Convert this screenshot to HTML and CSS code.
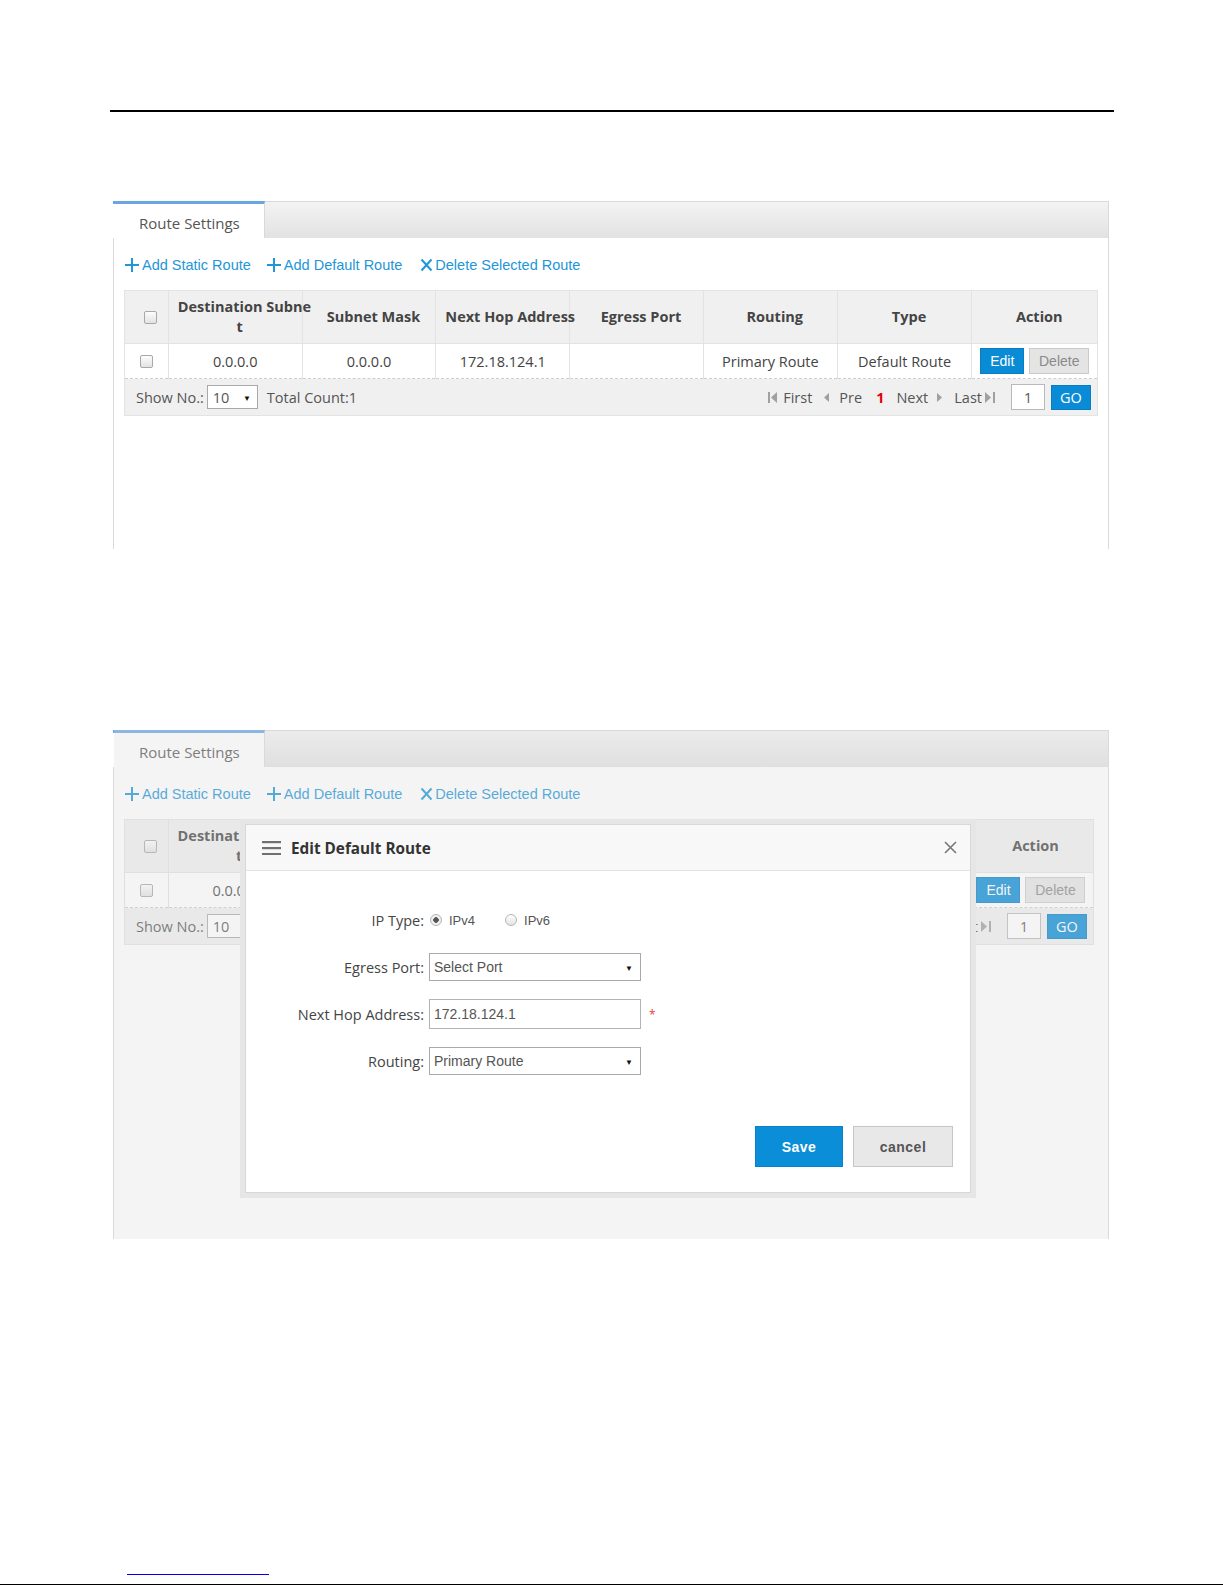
FILE: index.html
```html
<!DOCTYPE html>
<html>
<head>
  <meta charset="utf-8">
  <title>Route Settings</title>
  <link rel="stylesheet" href="styles.css">
</head>
<body>
  <div class="doc-rule"></div>

  <!-- Route list -->
  <div class="panel panel-list">
    <div class="tabs">
      <div class="tab">Route Settings</div>
    </div>
    <div class="panel-body">
      <div class="toolbar">
        <a class="tool" href="#"><svg class="ico-plus" width="16" height="16" viewBox="0 0 16 16"><path d="M8 1V15M1 8H15"/></svg>Add Static Route</a>
        <a class="tool" href="#"><svg class="ico-plus" width="16" height="16" viewBox="0 0 16 16"><path d="M8 1V15M1 8H15"/></svg>Add Default Route</a>
        <a class="tool tool-del" href="#"><svg class="ico-x" width="13" height="14" viewBox="0 0 13 14"><path d="M1.5 1.5L11.5 12.5M11.5 1.5L1.5 12.5"/></svg>Delete Selected Route</a>
      </div>

      <table class="grid">
        <colgroup>
          <col class="col-check"><col class="col-data"><col class="col-data"><col class="col-data">
          <col class="col-data"><col class="col-data"><col class="col-type"><col class="col-action">
        </colgroup>
        <thead>
          <tr>
            <th><input type="checkbox"></th>
            <th>Destination Subne<br>t</th>
            <th>Subnet Mask</th>
            <th>Next Hop Address</th>
            <th>Egress Port</th>
            <th>Routing</th>
            <th>Type</th>
            <th>Action</th>
          </tr>
        </thead>
        <tbody>
          <tr>
            <td><input type="checkbox"></td>
            <td>0.0.0.0</td>
            <td>0.0.0.0</td>
            <td>172.18.124.1</td>
            <td></td>
            <td>Primary Route</td>
            <td>Default Route</td>
            <td><div class="row-actions"><button class="btn-edit">Edit</button><button class="btn-del">Delete</button></div></td>
          </tr>
        </tbody>
        <tfoot>
          <tr>
            <td colspan="8">
              <div class="pager">
                <div class="pager-size">
                  Show No.:
                  <span class="select select-size"><select><option>10</option></select></span>
                  <span class="pager-total">Total Count:1</span>
                </div>
                <div class="pager-nav">
                  <a class="pg pg-first" href="#"><svg width="9" height="11" viewBox="0 0 9 11"><rect width="2" height="11"/><path d="M9 0V11L3 5.5Z"/></svg>First</a>
                  <a class="pg pg-prev" href="#"><svg width="5" height="9" viewBox="0 0 5 9"><path d="M5 0V9L0 4.5Z"/></svg>Pre</a>
                  <span class="pg-cur">1</span>
                  <a class="pg pg-next" href="#">Next<svg width="5" height="9" viewBox="0 0 5 9"><path d="M0 0V9L5 4.5Z"/></svg></a>
                  <a class="pg pg-last" href="#">Last<svg width="10" height="11" viewBox="0 0 10 11"><path d="M0 0V11L6 5.5Z"/><rect x="8" width="2" height="11"/></svg></a>
                  <input class="pg-input" type="text" value="1">
                  <button class="btn-go">GO</button>
                </div>
              </div>
            </td>
          </tr>
        </tfoot>
      </table>
    </div>
  </div>

  <!-- Edit dialog open over the list -->
  <div class="panel panel-edit">
    <div class="tabs">
      <div class="tab">Route Settings</div>
    </div>
    <div class="panel-body">
      <div class="toolbar">
        <a class="tool" href="#"><svg class="ico-plus" width="16" height="16" viewBox="0 0 16 16"><path d="M8 1V15M1 8H15"/></svg>Add Static Route</a>
        <a class="tool" href="#"><svg class="ico-plus" width="16" height="16" viewBox="0 0 16 16"><path d="M8 1V15M1 8H15"/></svg>Add Default Route</a>
        <a class="tool tool-del" href="#"><svg class="ico-x" width="13" height="14" viewBox="0 0 13 14"><path d="M1.5 1.5L11.5 12.5M11.5 1.5L1.5 12.5"/></svg>Delete Selected Route</a>
      </div>

      <table class="grid">
        <colgroup>
          <col class="col-check"><col class="col-data"><col class="col-data"><col class="col-data">
          <col class="col-data"><col class="col-data"><col class="col-type"><col class="col-action">
        </colgroup>
        <thead>
          <tr>
            <th><input type="checkbox"></th>
            <th class="th-clip">Destination Subne<br>t</th>
            <th>Subnet Mask</th>
            <th>Next Hop Address</th>
            <th>Egress Port</th>
            <th>Routing</th>
            <th>Type</th>
            <th>Action</th>
          </tr>
        </thead>
        <tbody>
          <tr>
            <td><input type="checkbox"></td>
            <td>0.0.0.0</td>
            <td>0.0.0.0</td>
            <td>172.18.124.1</td>
            <td></td>
            <td>Primary Route</td>
            <td>Default Route</td>
            <td><div class="row-actions"><button class="btn-edit">Edit</button><button class="btn-del">Delete</button></div></td>
          </tr>
        </tbody>
        <tfoot>
          <tr>
            <td colspan="8">
              <div class="pager">
                <div class="pager-size">
                  Show No.:
                  <span class="select select-size"><select><option>10</option></select></span>
                  <span class="pager-total">Total Count:1</span>
                </div>
                <div class="pager-nav">
                  <a class="pg pg-first" href="#"><svg width="9" height="11" viewBox="0 0 9 11"><rect width="2" height="11"/><path d="M9 0V11L3 5.5Z"/></svg>First</a>
                  <a class="pg pg-prev" href="#"><svg width="5" height="9" viewBox="0 0 5 9"><path d="M5 0V9L0 4.5Z"/></svg>Pre</a>
                  <span class="pg-cur">1</span>
                  <a class="pg pg-next" href="#">Next<svg width="5" height="9" viewBox="0 0 5 9"><path d="M0 0V9L5 4.5Z"/></svg></a>
                  <a class="pg pg-last" href="#">Last<svg width="10" height="11" viewBox="0 0 10 11"><path d="M0 0V11L6 5.5Z"/><rect x="8" width="2" height="11"/></svg></a>
                  <input class="pg-input" type="text" value="1">
                  <button class="btn-go">GO</button>
                </div>
              </div>
            </td>
          </tr>
        </tfoot>
      </table>
    </div>

    <div class="mask"></div>

    <div class="modal">
      <div class="modal-inner">
        <div class="modal-head">
          <svg class="ico-menu" width="19" height="14" viewBox="0 0 19 14"><rect y="0" width="19" height="2.2"/><rect y="6" width="19" height="2.2"/><rect y="12" width="19" height="2.2"/></svg>
          <span class="modal-title">Edit Default Route</span>
          <svg class="ico-close" width="13" height="13" viewBox="0 0 13 13"><path d="M1 1L12 12M12 1L1 12"/></svg>
        </div>
        <div class="modal-body">
          <div class="form-row">
            <label class="form-label">IP Type:</label>
            <label class="radio"><input type="radio" name="iptype" checked>IPv4</label>
            <label class="radio"><input type="radio" name="iptype">IPv6</label>
          </div>
          <div class="form-row">
            <label class="form-label">Egress Port:</label>
            <span class="select select-field"><select><option>Select Port</option></select></span>
          </div>
          <div class="form-row">
            <label class="form-label">Next Hop Address:</label>
            <input class="text-field" type="text" value="172.18.124.1">
            <span class="req">*</span>
          </div>
          <div class="form-row form-row-last">
            <label class="form-label">Routing:</label>
            <span class="select select-field"><select><option>Primary Route</option></select></span>
          </div>
          <div class="form-actions">
            <button class="btn-save">Save</button>
            <button class="btn-cancel">cancel</button>
          </div>
        </div>
      </div>
    </div>
  </div>

  <div class="doc-link"></div>
  <div class="doc-bottom"></div>
</body>
</html>
```

FILE: styles.css
```css
body {
  margin: 0;
  background: #fff;
  font-family: "Open Sans", "Liberation Sans", sans-serif;
  font-size: 14.5px;
  color: #444;
}

a {
  text-decoration: none;
}

button {
  cursor: pointer;
}

.doc-rule {
  width: 1004px;
  height: 2px;
  margin: 110px 0 0 110px;
  background: #000;
}

/* panel frame */
.panel {
  position: relative;
  box-sizing: border-box;
  width: 996px;
  margin-left: 113px;
  border-left: 1px solid #dadada;
  border-right: 1px solid #dadada;
  background: #fff;
}

.panel-list {
  margin-top: 89px;
  height: 348px;
}

.panel-edit {
  margin-top: 181px;
  height: 509px;
}

.tabs {
  box-sizing: border-box;
  height: 37px;
  border-top: 1px solid #d9d9d9;
  background: linear-gradient(#f3f3f3, #e2e2e2);
}

.tab {
  box-sizing: border-box;
  width: 152px;
  height: 37px;
  margin: -1px 0 0 -1px;
  padding: 8px 0 0 26px;
  border-top: 3px solid #6aa6e2;
  border-right: 1px solid #d9d9d9;
  background: #fff;
  color: #555;
  font-size: 15px;
  line-height: 22px;
}

.panel-body {
  padding: 0 10px;
}

.panel-edit .panel-body {
  padding-right: 14px;
}

/* toolbar */
.toolbar {
  display: flex;
  align-items: center;
  height: 20px;
  padding: 17px 0 15px;
}

.tool {
  display: flex;
  align-items: center;
  margin-right: 15px;
  color: #1e96d8;
  font-family: "Liberation Sans", Arial, sans-serif;
  font-size: 14.5px;
}

.tool svg {
  stroke: #1e96d8;
  stroke-width: 2;
  fill: none;
}

.ico-plus {
  margin-right: 2px;
}

.tool-del {
  margin-left: 3px;
}

.ico-x {
  margin-right: 2px;
}

/* route table */
.grid {
  width: 100%;
  table-layout: fixed;
  border-collapse: collapse;
  border: 1px solid #dedede;
}

.col-check { width: 4.5%; }
.col-data { width: 13.75%; }
.col-type { width: 13.85%; }
.col-action { width: 12.9%; }

.grid th,
.grid td {
  padding: 0;
  border: 1px solid #e3e3e3;
}

.grid th {
  height: 52px;
  padding-left: 9px;
  background: #f0f0f0;
  color: #444;
  font-weight: 700;
  line-height: 20px;
  white-space: nowrap;
}

.grid .th-clip {
  overflow: hidden;
}

.grid tbody td {
  height: 34px;
  background: #fff;
  text-align: center;
  border-bottom: none;
}

.grid tfoot td {
  height: 36px;
  padding: 0 6px 0 11px;
  background: #f0f0f0;
  border-top: 1px dashed #cdcdcd;
}

input[type="checkbox"] {
  appearance: none;
  -webkit-appearance: none;
  display: block;
  box-sizing: border-box;
  width: 13px;
  height: 13px;
  margin: 0 auto;
  border: 1px solid #a8a8a8;
  border-radius: 2px;
  background: linear-gradient(#fdfdfd, #e2e2e2);
}

.row-actions {
  display: flex;
  justify-content: center;
  gap: 5px;
}

.btn-edit,
.btn-del {
  box-sizing: border-box;
  height: 26px;
  padding: 0;
  border-radius: 0;
  font-family: "Liberation Sans", Arial, sans-serif;
  font-size: 14px;
}

.btn-edit {
  width: 44px;
  border: 1px solid #0a7cc2;
  background: #0a8bd6;
  color: #fff;
}

.btn-del {
  width: 60px;
  border: 1px solid #cbcbcb;
  background: #e4e4e4;
  color: #8a8a8a;
}

/* pager */
.pager {
  display: flex;
  align-items: center;
  justify-content: space-between;
  color: #555;
}

.pager-size {
  display: flex;
  align-items: center;
}

.select {
  position: relative;
  display: inline-block;
}

.select::after {
  content: "\25BC";
  position: absolute;
  top: 50%;
  transform: translateY(-50%);
  font-size: 8px;
  color: #111;
  pointer-events: none;
}

.select select {
  appearance: none;
  -webkit-appearance: none;
  display: block;
  box-sizing: border-box;
  margin: 0;
  border: 1px solid #a9a9a9;
  border-radius: 0;
  background: #fff;
  color: #555;
}

.select-size {
  margin-left: 3px;
}

.select-size::after {
  right: 7px;
}

.select-size select {
  width: 51px;
  height: 24px;
  padding: 0 0 0 5px;
  font-family: "Open Sans", sans-serif;
  font-size: 14.5px;
}

.pager-total {
  margin-left: 9px;
}

.pager-nav {
  display: flex;
  align-items: center;
}

.pg {
  display: flex;
  align-items: center;
  margin-left: 12px;
  color: #555;
}

.pg svg {
  fill: #a0a0a0;
}

.pg-first { margin-left: 0; }
.pg-first svg { margin-right: 6px; }
.pg-prev svg { margin-right: 10px; }
.pg-next svg { margin-left: 9px; }
.pg-last svg { margin-left: 3px; }

.pg-cur {
  margin-left: 14px;
  color: #e8000b;
  font-weight: 700;
}

.pg-input {
  box-sizing: border-box;
  width: 34px;
  height: 26px;
  margin-left: 16px;
  padding: 0;
  border: 1px solid #b9b9b9;
  text-align: center;
  font-family: "Open Sans", sans-serif;
  font-size: 14px;
  color: #555;
}

.btn-go {
  box-sizing: border-box;
  width: 40px;
  height: 25px;
  margin-left: 6px;
  padding: 0;
  border: 1px solid #0a7cc2;
  background: #0a8bd6;
  color: #fff;
  font-family: "Open Sans", sans-serif;
  font-size: 14.5px;
}

/* dialog */
.mask {
  position: absolute;
  inset: 0;
  z-index: 1;
  background: rgba(220, 220, 220, 0.3);
}

.modal {
  position: absolute;
  left: 126px;
  top: 89px;
  z-index: 2;
  box-sizing: border-box;
  width: 736px;
  border: 5px solid #e6e6e6;
}

.modal-inner {
  border: 1px solid #d8d8d8;
  background: #fff;
}

.modal-head {
  display: flex;
  align-items: center;
  height: 45px;
  padding: 0 13px 0 16px;
  border-bottom: 1px solid #e3e3e3;
  background: #f8f8f8;
}

.ico-menu {
  fill: #707070;
}

.modal-title {
  flex: 1;
  margin-left: 10px;
  font-size: 15.3px;
  font-weight: 700;
  color: #333;
}

.ico-close {
  stroke: #777;
  stroke-width: 1.6;
  fill: none;
}

.modal-body {
  padding: 34px 0 25px;
}

.form-row {
  display: flex;
  align-items: center;
  height: 30px;
  margin-bottom: 17px;
}

.form-row-last {
  margin-bottom: 50px;
}

.form-label {
  box-sizing: border-box;
  width: 183px;
  padding-right: 5px;
  text-align: right;
  color: #444;
}

.radio {
  display: flex;
  align-items: center;
  margin: 0 29px 0 1px;
  font-family: "Liberation Sans", Arial, sans-serif;
  font-size: 13px;
  color: #555;
}

input[type="radio"] {
  appearance: none;
  -webkit-appearance: none;
  box-sizing: border-box;
  width: 12px;
  height: 12px;
  margin: 0 7px 0 0;
  border: 1px solid #b5b5b5;
  border-radius: 50%;
  background: linear-gradient(#fdfdfd, #e4e4e4);
}

input[type="radio"]:checked {
  background: radial-gradient(circle, #555 0 2.5px, #f0f0f0 3px);
}

.select-field::after {
  right: 8px;
}

.select-field select,
.text-field {
  box-sizing: border-box;
  width: 212px;
  font-family: "Liberation Sans", Arial, sans-serif;
  font-size: 14px;
  color: #555;
}

.select-field select {
  height: 28px;
  padding: 0 0 0 4px;
}

.text-field {
  height: 30px;
  margin: 0;
  padding: 0 0 0 4px;
  border: 1px solid #b3b3b3;
}

.req {
  margin-left: 8px;
  color: #e5432f;
  font-size: 12px;
}

.form-actions {
  display: flex;
  justify-content: flex-end;
  gap: 10px;
  padding-right: 17px;
}

.btn-save,
.btn-cancel {
  box-sizing: border-box;
  height: 41px;
  padding: 0;
  font-family: "Liberation Sans", Arial, sans-serif;
  font-size: 14px;
  font-weight: 700;
  letter-spacing: 0.5px;
}

.btn-save {
  width: 88px;
  border: 1px solid #0a80cc;
  background: #0a8ed8;
  color: #fff;
}

.btn-cancel {
  width: 100px;
  border: 1px solid #c6c6c6;
  background: #e8e8e8;
  color: #555;
}

/* page footer marks */
.doc-link {
  width: 142px;
  margin: 335px 0 0 127px;
  border-top: 1px solid #0000ee;
}

.doc-bottom {
  width: 1223px;
  height: 1px;
  margin-top: 9px;
  background: #000;
}
```
